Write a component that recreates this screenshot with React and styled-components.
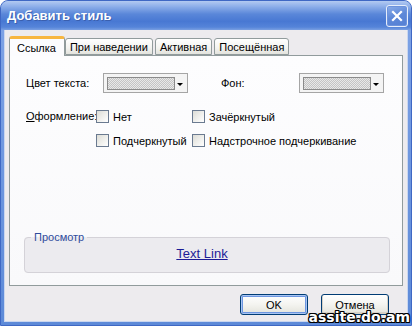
import React, { useState } from "react";
import styled, { createGlobalStyle } from "styled-components";

const GlobalStyle = createGlobalStyle`
  html, body {
    margin: 0;
    padding: 0;
    background: #ffffff;
  }
  body {
    font-family: "Liberation Sans", Arial, sans-serif;
    font-size: 11px;
    color: #000;
  }
`;

const Window = styled.div`
  position: relative;
  width: 412px;
  height: 326px;
  box-sizing: border-box;
  display: flex;
  flex-direction: column;
  border-radius: 8px 8px 0 0;
  overflow: hidden;
  background: linear-gradient(180deg, #7fa3e6 0%, #5d8ad8 100%);
  border: 1px solid #3f68c4;
`;

const TitleBar = styled.div`
  height: 29px;
  flex: none;
  display: flex;
  align-items: center;
  justify-content: space-between;
  padding: 0 3px 0 6px;
  background: linear-gradient(
    180deg,
    #b3caf1 0%,
    #8fb0ea 18%,
    #5a87d9 45%,
    #4878d3 70%,
    #5584d9 90%,
    #7aa0e2 100%
  );
`;

const Title = styled.span`
  font-family: "Liberation Sans", Arial, sans-serif;
  font-weight: bold;
  font-size: 13px;
  color: #ffffff;
  text-shadow: 1px 1px 0 #3a5fae;
`;

const CloseButton = styled.button`
  width: 22px;
  height: 22px;
  padding: 0;
  display: flex;
  align-items: center;
  justify-content: center;
  border: 1px solid #e6eefb;
  border-radius: 3px;
  background: linear-gradient(160deg, #8caee9 0%, #5d88d8 50%, #5580d4 100%);
  box-shadow: inset 0 0 0 1px #6d93dc;
`;

const Body = styled.div`
  flex: 1;
  margin: 0 3px 3px;
  background: #edebee;
  display: flex;
  flex-direction: column;
  padding: 6px 4px 0 4px;
  border: 1px solid #c9d6ef;
  border-top: none;
`;

const Tabs = styled.div`
  display: flex;
  align-items: flex-end;
  height: 19px;
`;

const Tab = styled.div`
  box-sizing: border-box;
  height: ${(p) => (p.$active ? "20px" : "17px")};
  margin-bottom: ${(p) => (p.$active ? "-1px" : "0")};
  margin-right: ${(p) => (p.$active ? "0" : "2px")};
  padding: ${(p) => (p.$active ? "0 8px 0 7px" : "0 4px")};
  display: flex;
  align-items: center;
  border: 1px solid #919b9c;
  border-bottom: ${(p) => (p.$active ? "none" : "1px solid #919b9c")};
  border-radius: 3px 3px 0 0;
  background: ${(p) =>
    p.$active
      ? "#fcfcfe"
      : "linear-gradient(180deg, #ffffff 0%, #f3f3f0 60%, #e3e3dd 100%)"};
  border-top: ${(p) => (p.$active ? "3px solid #f7b640" : "1px solid #919b9c")};
  position: relative;
  z-index: ${(p) => (p.$active ? 1 : 0)};
  font-size: 11px;
  white-space: nowrap;
`;

const Panel = styled.div`
  box-sizing: border-box;
  height: 231px;
  border: 1px solid #919b9c;
  background: linear-gradient(180deg, #fdfdfe 0%, #f9f9fb 100%);
  display: flex;
  flex-direction: column;
  padding: 17px 13px 12px 16px;
`;

const ColorRow = styled.div`
  display: flex;
  align-items: center;
  height: 20px;
`;

const FieldLabel = styled.span`
  width: ${(p) => p.$w}px;
  flex: none;
  font-size: 11px;
`;

const Dropdown = styled.div`
  box-sizing: border-box;
  width: 85px;
  height: 20px;
  flex: none;
  border: 1px solid #a5a5a5;
  background: #f4f4f4;
  display: flex;
  align-items: center;
  padding: 0 4px 0 3px;
  margin-right: ${(p) => p.$mr || 0}px;
`;

const Swatch = styled.div`
  width: 66px;
  height: 11px;
  border: 1px solid #8a8a8a;
  background-color: #d8d8d8;
  background-image: repeating-conic-gradient(#c4c4c4 0% 25%, #e8e8e8 0% 50%);
  background-size: 2px 2px;
`;

const Arrow = styled.div`
  margin-left: auto;
  width: 0;
  height: 0;
  border-left: 3px solid transparent;
  border-right: 3px solid transparent;
  border-top: 3px solid #000;
  margin-top: 2px;
`;

const DecorGrid = styled.div`
  display: grid;
  grid-template-columns: 70px 96px auto;
  grid-auto-rows: 13px;
  row-gap: 11px;
  margin-top: 17px;
  align-items: center;
`;

const DecorLabel = styled.span`
  font-size: 11px;
  line-height: 13px;
  white-space: nowrap;
  span {
    text-decoration: underline;
  }
`;

const Check = styled.label`
  display: flex;
  align-items: center;
  gap: 4px;
  font-size: 11px;
  white-space: nowrap;
  grid-column: ${(p) => p.$col};
`;

const Box = styled.span`
  box-sizing: border-box;
  width: 13px;
  height: 13px;
  flex: none;
  border: 1px solid #6a7a90;
  background: linear-gradient(135deg, #dcdcd6 0%, #f2f2ef 60%, #ffffff 100%);
`;

const Preview = styled.fieldset`
  margin: auto 0 0 -2px;
  box-sizing: border-box;
  height: 42px;
  width: 366px;
  padding: 0 10px 0 0;
  border: 1px solid #d4d2d8;
  border-radius: 4px;
  background: #ecebef;
  display: flex;
  justify-content: center;
  align-items: flex-start;
`;

const Legend = styled.legend`
  margin-left: 6px;
  padding: 0 3px;
  color: #2f4c9c;
  font-size: 11px;
`;

const LinkText = styled.a`
  margin-top: 3px;
  color: #1c1c96;
  text-decoration: underline;
  font-size: 13px;
  cursor: pointer;
`;

const Footer = styled.div`
  flex: 1;
  display: flex;
  justify-content: flex-end;
  align-items: flex-start;
  gap: 13px;
  padding: 8px 14px 0 0;
`;

const Button = styled.button`
  box-sizing: border-box;
  width: 68px;
  height: 21px;
  padding: 0;
  font-family: "Liberation Sans", Arial, sans-serif;
  font-size: 11px;
  color: #000;
  border: 1px solid #003c74;
  border-radius: 3px;
  background: linear-gradient(180deg, #ffffff 0%, #f4f4f0 50%, #e3e3db 100%);
  box-shadow: ${(p) =>
    p.$default
      ? "inset 0 0 0 1px #a9c5f3, inset 0 0 0 2px #6d96e0"
      : "inset 0 -1px 0 1px #d6d0c5"};
`;

const Watermark = styled.div`
  position: absolute;
  right: 1px;
  bottom: 0;
  font-family: "DejaVu Sans", Verdana, sans-serif;
  font-weight: bold;
  font-size: 14px;
  color: #ffffff;
  text-shadow: -1px -1px 0 #000, 1px -1px 0 #000, -1px 1px 0 #000,
    1px 1px 0 #000, 0 1px 0 #000, 0 -1px 0 #000, 1px 0 0 #000, -1px 0 0 #000;
`;

const tabs = ["Ссылка", "При наведении", "Активная", "Посещённая"];

const App = () => {
  const [active, setActive] = useState(0);

  return (
    <>
      <GlobalStyle />
      <Window>
        <TitleBar>
          <Title>Добавить стиль</Title>
          <CloseButton aria-label="close">
            <svg width="12" height="12" viewBox="0 0 12 12">
              <path
                d="M2 2 L10 10 M10 2 L2 10"
                stroke="#ffffff"
                strokeWidth="2.2"
                strokeLinecap="square"
              />
            </svg>
          </CloseButton>
        </TitleBar>
        <Body>
          <Tabs>
            {tabs.map((t, i) => (
              <Tab key={t} $active={i === active} onClick={() => setActive(i)}>
                {t}
              </Tab>
            ))}
          </Tabs>
          <Panel>
            <ColorRow>
              <FieldLabel $w={77}>Цвет текста:</FieldLabel>
              <Dropdown $mr={33}>
                <Swatch />
                <Arrow />
              </Dropdown>
              <FieldLabel $w={78}>Фон:</FieldLabel>
              <Dropdown>
                <Swatch />
                <Arrow />
              </Dropdown>
            </ColorRow>
            <DecorGrid>
              <DecorLabel>
                <span>О</span>формление:
              </DecorLabel>
              <Check $col={2}>
                <Box />
                Нет
              </Check>
              <Check $col={3}>
                <Box />
                Зачёркнутый
              </Check>
              <Check $col={2}>
                <Box />
                Подчеркнутый
              </Check>
              <Check $col={3}>
                <Box />
                Надстрочное подчеркивание
              </Check>
            </DecorGrid>
            <Preview>
              <Legend>Просмотр</Legend>
              <LinkText>Text Link</LinkText>
            </Preview>
          </Panel>
          <Footer>
            <Button $default>OK</Button>
            <Button>Отмена</Button>
          </Footer>
        </Body>
        <Watermark>assite.do.am</Watermark>
      </Window>
    </>
  );
};

export default App;
